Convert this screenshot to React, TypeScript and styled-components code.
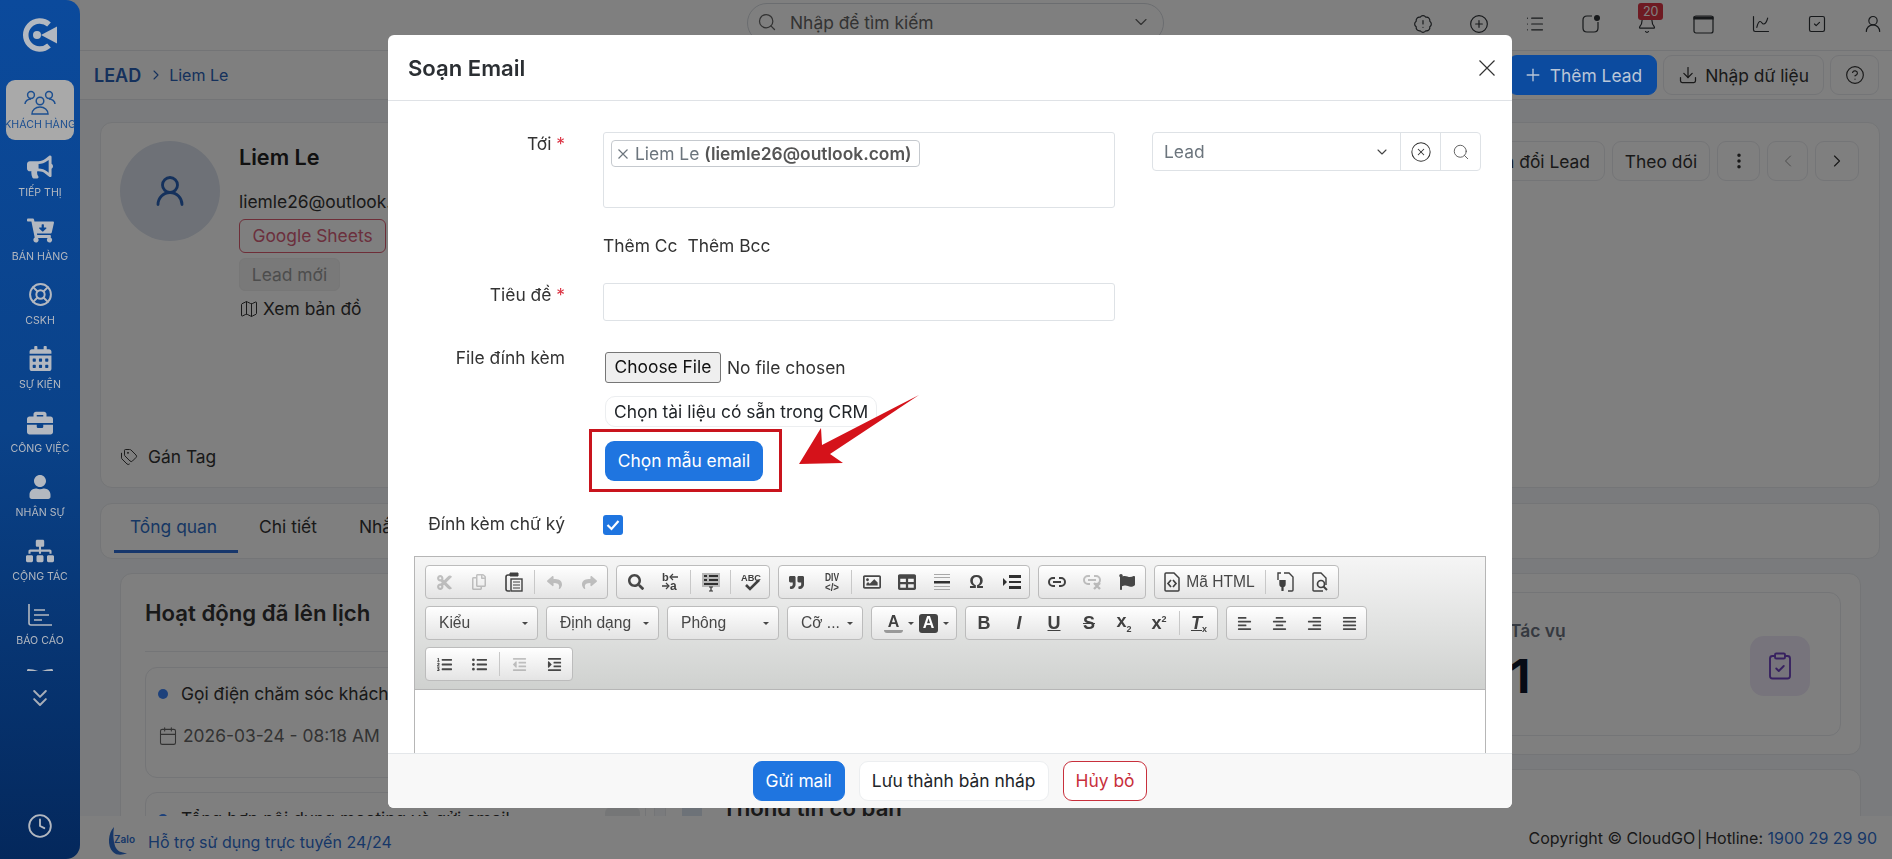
import React from 'react';
import styled, { createGlobalStyle } from 'styled-components';
import {
  BadgeAlert, Bell, ChartSpline, ChevronDown, ChevronLeft, ChevronRight, ChevronsDown, CircleHelp, CirclePlus,
  CircleX, Clock, Download, EllipsisVertical, List, LifeBuoy, Map, Plus, Search, SquareCheck, Tags, UserRound,
  ClipboardCheck, Calendar,
} from 'lucide-react';
import {
  FaAlignCenter, FaAlignJustify, FaAlignLeft, FaAlignRight, FaBookOpen, FaBriefcase, FaBullhorn, FaCalendarAlt,
  FaCartArrowDown, FaCut, FaFlag, FaIndent, FaListOl, FaListUl, FaOutdent, FaQuoteRight, FaRegCopy,
  FaRegImage, FaReply, FaSearch, FaShare, FaSitemap, FaTable, FaUser,
} from 'react-icons/fa';

const GlobalStyle = createGlobalStyle`
  html, body { margin: 0; padding: 0; height: 100%; overflow: hidden; }
  body { font-family: Inter, "Noto Sans", sans-serif; font-size: 17.4px; color: #333; }
  * { box-sizing: border-box; }
`;

const Page = styled.div`
  display: flex;
  height: 100vh;
  background: #f4f7fa;
  overflow: hidden;
`;

const Backdrop = styled.div`
  position: fixed;
  top: 0;
  left: 0;
  width: 100vw;
  height: 100vh;
  z-index: 10;
  background-color: rgba(0, 0, 0, 0.5);
`;

/* sidebar sits above the dim layer so its blue keeps the colours of the picture */
const Sidebar = styled.aside`
  position: relative;
  z-index: 11;
  flex: 0 0 80px;
  display: flex;
  flex-direction: column;
  align-items: center;
  height: 100vh;
  border-radius: 0 14px 14px 0;
  background: linear-gradient(180deg, #0b4a9c 0%, #0a4289 50%, #04285c 100%);
  color: #b3b8c0;
`;

const LogoBox = styled.div`
  height: 80px;
  display: flex;
  align-items: center;
  justify-content: center;
  padding-bottom: 10px;
`;

const NavList = styled.nav`
  height: 591px;
  width: 100%;
  overflow: hidden;
  display: flex;
  flex-direction: column;
  align-items: center;
`;

const NavItem = styled.div<{ $active?: boolean }>`
  flex: 0 0 ${(p) => (p.$active ? '60px' : '64px')};
  width: 68px;
  margin-bottom: ${(p) => (p.$active ? '4px' : '0')};
  padding-top: 9px;
  display: flex;
  flex-direction: column;
  align-items: center;
  gap: ${(p) => (p.$active ? '2px' : '6px')};
  border-radius: 9px;
  background: ${(p) => (p.$active ? '#a9a9a9' : 'transparent')};
  color: ${(p) => (p.$active ? '#1d4f90' : '#b3b8c0')};
`;

const NavIcon = styled.span`
  flex: 0 0 27px;
  height: 27px;
  display: flex;
  align-items: center;
  justify-content: center;
`;

const NavLabel = styled.span`
  font-size: 10.6px;
  line-height: 14px;
  white-space: nowrap;
  text-transform: uppercase;
`;

const SideMore = styled.div`
  margin-top: 13px;
  height: 30px;
  color: #a8aeb8;
`;

const SideClock = styled.div`
  margin-top: auto;
  margin-bottom: 20px;
  color: #b3b8c0;
  height: 26px;
`;

const MainColumn = styled.div`
  flex: 1;
  min-width: 0;
  height: 100vh;
  display: flex;
  flex-direction: column;
`;

const TopBar = styled.header`
  flex: 0 0 51px;
  display: flex;
  align-items: flex-start;
  padding: 3px 9px 0 667px;
  background: #fff;
  border-bottom: 1px solid #e6e8ec;
`;

const SearchBox = styled.div`
  width: 417px;
  height: 40px;
  padding: 0 12px 2px 9px;
  display: flex;
  align-items: center;
  gap: 13px;
  border: 1px solid #d6dae0;
  border-radius: 20px;
  color: #666;
`;

const SearchText = styled.span`
  flex: 1;
`;

const TopIcons = styled.div`
  margin-left: auto;
  margin-top: 11px;
  display: flex;
  gap: 36.2px;
  color: #2e3236;
`;

const BellWrap = styled.span`
  position: relative;
  display: block;
  width: 20px;
  height: 20px;
`;

const BellBadge = styled.span`
  position: absolute;
  left: 1px;
  top: -11px;
  width: 25px;
  height: 17px;
  background: #dc3545;
  border-radius: 3px;
  color: #fff;
  font-size: 12.5px;
  line-height: 17px;
  text-align: center;
`;

const BreadBar = styled.div`
  flex: 0 0 49px;
  display: flex;
  align-items: center;
  padding: 0 13px 0 14px;
  background: #fff;
  border-bottom: 1px solid #e6e8ec;
`;

const CrumbRoot = styled.span`
  font-size: 18px;
  font-weight: 600;
  color: #2a62b8;
`;

const CrumbSep = styled.span`
  display: flex;
  margin: 0 5px 0 7px;
  color: #2a62b8;
`;

const CrumbLeaf = styled.span`
  font-size: 16px;
  color: #2a62b8;
`;

const BarActions = styled.div`
  margin-left: auto;
  display: flex;
  gap: 6px;
`;

const PageButton = styled.div<{ $primary?: boolean; $w?: number }>`
  position: relative;
  z-index: ${(p) => (p.$primary ? 11 : 'auto')};
  height: 40px;
  width: ${(p) => (p.$w ? `${p.$w}px` : 'auto')};
  padding: 0 ${(p) => (p.$w ? '0' : '14px')};
  display: flex;
  align-items: center;
  justify-content: center;
  gap: 7px;
  border-radius: 9px;
  white-space: nowrap;
  background: ${(p) => (p.$primary ? '#0c4b9f' : '#fff')};
  color: ${(p) => (p.$primary ? '#b9c6d8' : '#333')};
  border: 1px solid ${(p) => (p.$primary ? '#0c4b9f' : '#e8eaee')};
`;

const Content = styled.main`
  flex: 1;
  min-height: 0;
  overflow: hidden;
  padding: 22px 12px 0 20px;
`;

const ProfileCard = styled.section`
  height: 366px;
  padding: 18px 20px 17px 19px;
  display: flex;
  flex-direction: column;
  background: #fff;
  border: 1px solid #e8eaee;
  border-radius: 12px;
`;

const ProfileTop = styled.div`
  display: flex;
`;

const Avatar = styled.div`
  flex: 0 0 100px;
  height: 100px;
  margin-right: 19px;
  display: flex;
  align-items: center;
  justify-content: center;
  border-radius: 50%;
  background: #dce3ee;
  color: #2a62b8;
`;

const ProfileInfo = styled.div`
  width: 300px;
`;

const PersonName = styled.div`
  font-size: 21.6px;
  font-weight: 600;
  line-height: 32px;
  color: #222;
`;

const PersonMail = styled.div`
  margin-top: 17px;
  line-height: 24px;
`;

const SourceTag = styled.div`
  margin-top: 5px;
  width: 147px;
  height: 34px;
  line-height: 32px;
  text-align: center;
  border: 1px solid #dc5c70;
  border-radius: 6px;
  color: #d7607a;
`;

const StatusTag = styled.div`
  margin-top: 5px;
  width: 101px;
  height: 33px;
  line-height: 31px;
  text-align: center;
  background: #f2f2f2;
  border: 1px solid #eeeeee;
  border-radius: 6px;
  color: #9a9a9a;
`;

const MapLink = styled.div`
  margin-top: 7px;
  display: flex;
  align-items: center;
  gap: 4px;
  line-height: 22px;
  color: #333;
`;

const ProfileActions = styled.div`
  margin-left: auto;
  display: flex;
  gap: 7px;
`;

const TagRow = styled.div`
  margin-top: auto;
  display: flex;
  align-items: center;
  gap: 10px;
  line-height: 26px;
`;

const TabsCard = styled.div`
  margin-top: 15px;
  height: 56px;
  padding-left: 13px;
  display: flex;
  background: #fff;
  border: 1px solid #e8eaee;
  border-radius: 12px;
`;

const Tab = styled.div<{ $active?: boolean }>`
  height: 49px;
  margin-right: 5px;
  padding: 0 21px 0 16px;
  line-height: 46px;
  white-space: nowrap;
  color: ${(p) => (p.$active ? '#2f6fc8' : '#333')};
  border-bottom: 3px solid ${(p) => (p.$active ? '#2f6fd8' : 'transparent')};
`;

const PanelRow = styled.div`
  margin-top: 14px;
  padding: 0 19px 0 20px;
  display: flex;
  gap: 10px;
`;

const ActivityPanel = styled.section`
  flex: 0 0 535px;
  height: 400px;
  padding: 25px 8px 0 24px;
  background: #fff;
  border: 1px solid #e8eaee;
  border-radius: 12px;
`;

const PanelTitle = styled.h3`
  margin: 0;
  font-size: 22.2px;
  font-weight: 600;
  line-height: 28px;
  color: #333;
`;

const PanelRule = styled.div`
  margin: 24px 0 15px;
  height: 1px;
  background: #e8eaee;
`;

const ActivityItem = styled.div`
  height: 111px;
  margin-bottom: 14px;
  padding: 14px 5px 0 17px;
  border: 1px solid #e8eaee;
  border-radius: 12px;
`;

const ActivityHead = styled.div`
  height: 24px;
  display: flex;
  align-items: center;
  gap: 13px;
  line-height: 24px;
  white-space: nowrap;
`;

const Dot = styled.span`
  flex: 0 0 10px;
  height: 10px;
  margin-left: -5px;
  border-radius: 50%;
  background: #3b82f6;
`;

const ActivityDate = styled.div`
  margin: 18px 0 0 -5px;
  display: flex;
  align-items: center;
  gap: 5px;
  line-height: 24px;
  color: #666;
`;

const ItemTile = styled.span`
  align-self: flex-start;
  margin-left: auto;
  flex: 0 0 35px;
  height: 36px;
  border-radius: 6px;
  background: #ebedef;
`;

const SideColumn = styled.div`
  flex: 1;
  min-width: 0;
`;

const StatsPanel = styled.section`
  height: 182px;
  padding: 18px 19px;
  display: flex;
  justify-content: flex-end;
  background: #fff;
  border: 1px solid #e8eaee;
  border-radius: 12px;
`;

const StatCard = styled.div`
  width: 356px;
  padding: 26px 30px 0 24px;
  display: flex;
  justify-content: space-between;
  border: 1px solid #e8eaee;
  border-radius: 12px;
`;

const StatLabel = styled.div`
  font-weight: 600;
  line-height: 24px;
  color: #6b7280;
`;

const StatValue = styled.div`
  margin-top: 7px;
  font-size: 47px;
  font-weight: 700;
  line-height: 52px;
  color: #0f172a;
`;

const StatTile = styled.div`
  margin-top: 17px;
  width: 60px;
  height: 60px;
  display: flex;
  align-items: center;
  justify-content: center;
  border-radius: 14px;
  background: #eee9f8;
  color: #6f42c1;
`;

const InfoPanel = styled.section`
  margin-top: 14px;
  height: 200px;
  padding: 24px 16px;
  display: flex;
  gap: 20px;
  background: #fff;
  border: 1px solid #e8eaee;
  border-radius: 12px;
`;

const InfoTile = styled.span`
  flex: 0 0 20px;
  height: 40px;
  margin-top: 13px;
  background: #dbe4f0;
`;

const FooterBar = styled.footer`
  position: relative;
  flex: 0 0 43px;
  padding: 0 15px 0 27px;
  display: flex;
  align-items: center;
  font-size: 16px;
  background: #fff;
`;

const ZaloBox = styled.span`
  display: flex;
  margin-top: 6px;
`;

const SupportText = styled.span`
  margin: 8px 0 0 12px;
  color: #2f6fd0;
`;

const Copyright = styled.span`
  margin-left: auto;
  color: #333;
`;

const HotlineNo = styled.span`
  color: #2f6fd0;
`;

const Modal = styled.div`
  position: fixed;
  z-index: 20;
  left: 388px;
  top: 35px;
  width: 1124px;
  height: 773px;
  display: flex;
  flex-direction: column;
  overflow: hidden;
  background: #fff;
  border-radius: 6px;
`;

const ModalHead = styled.div`
  flex: 0 0 66px;
  display: flex;
  align-items: center;
  justify-content: space-between;
  padding: 0 17px 0 20px;
  border-bottom: 1px solid #dfe2e6;
`;

const ModalTitle = styled.h2`
  margin: 0;
  font-size: 22.1px;
  font-weight: 600;
  color: #2b2f33;
`;

const ModalBody = styled.div`
  flex: 1;
  min-height: 0;
  overflow-y: scroll;
  padding: 31px 0 42px;

  &::-webkit-scrollbar { width: 10px; }
  &::-webkit-scrollbar-track { background: #fff; }
  &::-webkit-scrollbar-thumb { background: #c9c9c9; border-radius: 5px; }
`;

const FormRow = styled.div<{ $mt?: number }>`
  display: grid;
  grid-template-columns: 177px 512px auto;
  column-gap: 38px;
  margin-top: ${(p) => p.$mt ?? 0}px;
`;

const FieldLabel = styled.label<{ $lift?: number }>`
  margin-top: ${(p) => -(p.$lift ?? 0)}px;
  text-align: right;
  line-height: 24px;
  color: #333;
`;

const Star = styled.span`
  color: #dc3545;
`;

const RecipientBox = styled.div`
  height: 76px;
  padding: 7px;
  border: 1px solid #dee2e6;
  border-radius: 3px;
`;

const RecipientChip = styled.div`
  display: inline-flex;
  align-items: center;
  height: 27px;
  padding: 0 7px 0 5px;
  gap: 6px;
  background: #fff;
  border: 1px solid #c5c9ce;
  border-radius: 4px;
  color: #6c757d;
  white-space: nowrap;
`;

const ChipAddress = styled.b`
  font-weight: 600;
  color: #555;
`;

const CcLinks = styled.div`
  display: flex;
  gap: 10px;
  line-height: 24px;
`;

const TextInput = styled.div`
  height: 38px;
  border: 1px solid #dee2e6;
  border-radius: 3px;
`;

const PickerGroup = styled.div`
  margin-left: -1px;
  width: 329px;
  height: 39px;
  display: flex;
  border: 1px solid #dee2e6;
  border-radius: 4px;
  color: #6c757d;
`;

const PickerSelect = styled.div`
  flex: 1;
  padding: 0 10px 0 11px;
  display: flex;
  align-items: center;
  justify-content: space-between;
`;

const PickerBtn = styled.div`
  flex: 0 0 40px;
  display: flex;
  align-items: center;
  justify-content: center;
  border-left: 1px solid #dee2e6;
`;

const FileLine = styled.div`
  margin-left: 2px;
  display: flex;
  align-items: center;
  gap: 6px;
  height: 31px;
  color: #333;
`;

const FileButton = styled.div`
  width: 116px;
  height: 31px;
  line-height: 28px;
  text-align: center;
  background: #efefef;
  border: 1px solid #767676;
  border-radius: 3px;
  color: #111;
`;

const DocButton = styled.div`
  margin: 13px 0 14px 2px;
  width: 272px;
  height: 31px;
  padding-left: 8px;
  line-height: 29px;
  white-space: nowrap;
  background: #fff;
  border: 1px solid #eceef0;
  border-radius: 10px;
  color: #212529;
`;

const TemplateWrap = styled.div`
  position: relative;
  margin-left: 2px;
  width: 158px;
  height: 40px;
`;

const TemplateButton = styled.div`
  height: 40px;
  line-height: 40px;
  text-align: center;
  background: #1f75e0;
  border-radius: 9px;
  color: #fff;
`;

const Highlight = styled.span`
  position: absolute;
  left: -16px;
  top: -12px;
  width: 193px;
  height: 63px;
  border: 3px solid #c9141d;
`;

const Arrow = styled.svg`
  position: absolute;
  left: 194px;
  top: -46px;
`;

const CheckBox = styled.span`
  display: flex;
  align-items: center;
  justify-content: center;
  width: 20px;
  height: 20px;
  border-radius: 3px;
  background: #1f75e0;
  color: #fff;
`;

const Editor = styled.div`
  margin: 20px 0 0 26px;
  width: 1072px;
  border: 1px solid #b6b6b6;
  font-family: "Liberation Sans", Arial, sans-serif;
  font-size: 15.6px;
  color: #474747;
`;

const EditorTools = styled.div`
  height: 133px;
  padding: 8px 0 0 10px;
  display: flex;
  flex-direction: column;
  gap: 7px;
  background: linear-gradient(180deg, #f5f5f5, #cfd1cf);
  border-bottom: 1px solid #b6b6b6;
`;

const EditorArea = styled.div`
  height: 200px;
  background: #fff;
`;

const ToolRow = styled.div`
  height: 34px;
  display: flex;
  gap: 8px;
`;

const ToolGroup = styled.div<{ $w: number }>`
  width: ${(p) => p.$w}px;
  height: 34px;
  display: flex;
  align-items: center;
  justify-content: center;
  background: linear-gradient(180deg, #fff, #e4e4e4);
  border: 1px solid #bcbcbc;
  border-radius: 4px;
`;

const ToolBtn = styled.span<{ $off?: boolean; $wide?: boolean; $narrow?: boolean }>`
  flex: 0 0 ${(p) => (p.$wide ? 'auto' : p.$narrow ? '29px' : '35px')};
  height: 100%;
  padding: 0 ${(p) => (p.$wide ? '8px' : '0')};
  display: flex;
  align-items: center;
  justify-content: center;
  gap: ${(p) => (p.$wide ? '5px' : '0')};
  opacity: ${(p) => (p.$off ? 0.3 : 1)};
`;

const ToolSep = styled.span`
  flex: 0 0 1px;
  height: 24px;
  margin: 0 2px;
  background: #c8c8c8;
`;

const Combo = styled.div<{ $w: number }>`
  width: ${(p) => p.$w}px;
  height: 34px;
  padding: 0 9px 0 13px;
  display: flex;
  align-items: center;
  justify-content: space-between;
  white-space: nowrap;
  background: linear-gradient(180deg, #fff, #e4e4e4);
  border: 1px solid #bcbcbc;
  border-radius: 4px;
`;

const Caret = styled.i`
  width: 0;
  height: 0;
  border: 3px solid transparent;
  border-top: 3px solid #474747;
  border-bottom: 0;
`;

const FormatGlyph = styled.span<{ $italic?: boolean; $under?: boolean; $strike?: boolean }>`
  font-family: "Liberation Sans", Arial, sans-serif;
  font-size: 18px;
  font-weight: 700;
  line-height: 1;
  color: #404040;
  font-style: ${(p) => (p.$italic ? 'italic' : 'normal')};
  text-decoration: ${(p) => (p.$under ? 'underline' : p.$strike ? 'line-through' : 'none')};

  sub, sup { font-size: 9px; }
`;

const ColorA = styled.span<{ $fill?: boolean }>`
  width: 19px;
  height: 19px;
  display: flex;
  align-items: center;
  justify-content: center;
  border-radius: 3px;
  font-size: 16px;
  font-weight: 700;
  color: ${(p) => (p.$fill ? '#fff' : '#404040')};
  background: ${(p) => (p.$fill ? '#444' : 'transparent')};
  border-bottom: ${(p) => (p.$fill ? '0' : '3px solid #999')};
`;

const ModalFoot = styled.div`
  flex: 0 0 55px;
  display: flex;
  align-items: center;
  justify-content: center;
  gap: 14px;
  background: #f8f8f8;
  border-top: 1px solid #e4e7ea;
`;

const FootButton = styled.div<{ $kind: 'primary' | 'plain' | 'danger' }>`
  height: 40px;
  padding: 0 12px;
  line-height: 38px;
  border-radius: 9px;
  white-space: nowrap;
  background: ${(p) => (p.$kind === 'primary' ? '#1f75e0' : '#fff')};
  color: ${(p) => (p.$kind === 'primary' ? '#fff' : p.$kind === 'danger' ? '#c8303c' : '#212529')};
  border: 1px solid ${(p) => (p.$kind === 'primary' ? '#1f75e0' : p.$kind === 'danger' ? '#c8303c' : '#eceef0')};
`;

function Logo() {
  return (
    <svg width="38" height="34" viewBox="0 0 38 34">
      <path d="M28 6.5A14 14 0 1 0 28 27.5" fill="none" stroke="#b3b8c0" strokeWidth="5.5" />
      <circle cx="16" cy="17" r="4" fill="#b3b8c0" />
      <path d="M20 17 36 8.5V25.5Z" fill="#b3b8c0" />
    </svg>
  );
}

function CrowdIcon() {
  return (
    <svg width="32" height="28" viewBox="0 0 32 28" fill="none" stroke="currentColor" strokeWidth="1.5">
      <circle cx="7" cy="6" r="3.4" />
      <circle cx="25" cy="6" r="3.4" />
      <circle cx="16" cy="12" r="3.8" />
      <path d="M1 15c0-3 3-5 6-5M31 15c0-3-3-5-6-5M8 25c0-4 3.500-7 8-7s8 3 8 7z" />
    </svg>
  );
}

function ReportIcon() {
  return (
    <svg width="26" height="24" viewBox="0 0 26 24" fill="none" stroke="currentColor" strokeWidth="1.6">
      <path d="M2 1v19q0 2 2 2h21M7 7h11M7 12h15M7 17h8" />
    </svg>
  );
}

function ChatDotIcon() {
  return (
    <svg width="20" height="20" viewBox="0 0 20 20" fill="none" stroke="currentColor" strokeWidth="1.2">
      <path d="M11 2H6Q2 2 2 6v8q0 4 4 4h7q4 0 4-4V8" />
      <circle cx="16" cy="4" r="3" fill="currentColor" stroke="none" />
    </svg>
  );
}

function TopCalendar() {
  return (
    <svg width="21" height="20" viewBox="0 0 21 20" fill="none" stroke="currentColor" strokeWidth="1.2">
      <rect x="1" y="2" width="19" height="17" rx="2" />
      <path d="M1 3h19v2H1z" fill="currentColor" />
    </svg>
  );
}

function ZaloMark() {
  return (
    <svg width="29" height="30" viewBox="0 0 29 30">
      <path d="M7 1C1 7 0 20 6 26c4 4 10 3 14 1-6 0-10-2-12-7C6 14 6 7 7 1Z" fill="#2f6fd0" />
      <text x="7" y="17" fontFamily="Inter, sans-serif" fontSize="10" fontWeight="600" fill="#2f6fd0">Zalo</text>
    </svg>
  );
}

function PasteIcon() {
  return (
    <svg width="18" height="20" viewBox="0 0 18 20" fill="none" stroke="#404040">
      <path d="M5 3H3Q1 3 1 5v12q0 2 2 2h2" strokeWidth="1.6" />
      <path d="M5 1h8v3H5z" fill="#404040" />
      <rect x="6" y="7" width="11" height="12" strokeWidth="1.4" />
      <path d="M8 10h7M8 13h7M8 16h7" strokeWidth="1.2" />
    </svg>
  );
}

function ReplaceIcon() {
  return (
    <svg width="20" height="20" viewBox="0 0 20 20">
      <text x="1" y="9" fontFamily="Liberation Sans" fontSize="11" fontWeight="700" fill="#404040">b</text>
      <text x="9" y="18" fontFamily="Liberation Sans" fontSize="12" fontWeight="700" fill="#404040">a</text>
      <path d="M10 5h7M1 14h6" stroke="#404040" strokeWidth="1.3" />
      <path d="M12 2 9 5l3 3M5 11l3 3-3 3" fill="none" stroke="#404040" strokeWidth="1.2" />
    </svg>
  );
}

function SelectAllIcon() {
  return (
    <svg width="20" height="20" viewBox="0 0 20 20">
      <rect x="1" y="1" width="18" height="14" fill="#b9b9b9" />
      <path d="M3 3h3v2H3zM8 3h9v2H8zM3 7h3v2H3zM8 7h9v2H8zM3 11h14v2H3z" fill="#303030" />
      <path d="M8 15h4M10 15v4M8 19h4" stroke="#303030" strokeWidth="1.2" />
    </svg>
  );
}

function SpellIcon() {
  return (
    <svg width="22" height="20" viewBox="0 0 22 20">
      <text x="1" y="9" fontFamily="Liberation Sans" fontSize="9.500" fontWeight="700" textLength="20" lengthAdjust="spacingAndGlyphs" fill="#404040">ABC</text>
      <path d="M6 13l4 4 9-9" fill="none" stroke="#404040" strokeWidth="2.600" />
    </svg>
  );
}

function DivIcon() {
  return (
    <svg width="20" height="22" viewBox="0 0 20 22">
      <text x="3" y="10" fontFamily="Liberation Sans" fontSize="10.500" fontWeight="700" textLength="14" lengthAdjust="spacingAndGlyphs" fill="#404040">DIV</text>
      <text x="3" y="20" fontFamily="Liberation Sans" fontSize="10.500" fontWeight="700" textLength="14" lengthAdjust="spacingAndGlyphs" fill="#404040">&lt;/&gt;</text>
    </svg>
  );
}

function RuleIcon() {
  return (
    <svg width="20" height="20" viewBox="0 0 20 20">
      <path d="M2 2h16v1H2zM2 5h16v1H2zM2 14h16v1H2zM2 17h16v1H2z" fill="#a8a8a8" />
      <path d="M2 9h16v2.500H2z" fill="#303030" />
    </svg>
  );
}

function BreakIcon() {
  return (
    <svg width="20" height="20" viewBox="0 0 20 20">
      <path d="M1 6l4 4-4 4z" fill="#303030" />
      <path d="M7 3h12v3H7zM7 9h12v2H7zM7 14h12v3H7z" fill="#303030" />
    </svg>
  );
}

function ChainIcon() {
  return (
    <svg width="18" height="12" viewBox="0 0 18 12" fill="none" stroke="#404040" strokeWidth="2">
      <path d="M7 2H5a4 4 0 0 0 0 8h2M11 2h2a4 4 0 0 1 0 8h-2M5 6h8" />
    </svg>
  );
}

function BrokenChainIcon() {
  return (
    <svg width="18" height="16" viewBox="0 0 18 16" fill="none" stroke="#404040" strokeWidth="2">
      <path d="M7 2H5a4 4 0 0 0 0 8h2M11 2h2a4 4 0 0 1 0 8h-2M5 6h8" />
      <path d="M11 9l6 6M17 9l-6 6" strokeWidth="2.400" />
    </svg>
  );
}

function SourceIcon() {
  return (
    <svg width="18" height="20" viewBox="0 0 18 20" fill="none" stroke="#404040" strokeWidth="1.500">
      <path d="M3 1h8l5 5v12q0 1-1 1H3q-1 0-1-1V2q0-1 1-1z" />
      <path d="M8 8 5 11.500 8 15M10 8l3 3.500L10 15" strokeWidth="1.700" />
    </svg>
  );
}

function TemplatesIcon() {
  return (
    <svg width="18" height="20" viewBox="0 0 18 20" fill="none" stroke="#404040" strokeWidth="1.400">
      <path d="M8 1h5l4 4v13q0 1-1 1h-4M5 1H2v7" />
      <path d="M4 8v4a2.500 2.500 0 0 0 5 0V8" fill="#404040" />
      <path d="M6.500 14v5" strokeWidth="2.200" />
    </svg>
  );
}

function PreviewIcon() {
  return (
    <svg width="18" height="20" viewBox="0 0 18 20" fill="none" stroke="#404040" strokeWidth="1.400">
      <path d="M12 19H3q-1 0-1-1V2q0-1 1-1h7l5 5v7" />
      <circle cx="10" cy="12" r="3.500" strokeWidth="1.700" />
      <path d="M12.500 14.500 16 18" strokeWidth="2" />
    </svg>
  );
}

const navItems: { label: string; icon: React.ReactNode; active?: boolean }[] = [
  { label: 'Khách hàng', icon: <CrowdIcon />, active: true },
  { label: 'Tiếp thị', icon: <FaBullhorn size={26} /> },
  { label: 'Bán hàng', icon: <FaCartArrowDown size={27} /> },
  { label: 'CSKH', icon: <LifeBuoy size={25} strokeWidth={1.9} /> },
  { label: 'Sự kiện', icon: <FaCalendarAlt size={25} /> },
  { label: 'Công việc', icon: <FaBriefcase size={26} /> },
  { label: 'Nhân sự', icon: <FaUser size={24} /> },
  { label: 'Cộng tác', icon: <FaSitemap size={28} /> },
  { label: 'Báo cáo', icon: <ReportIcon /> },
  { label: 'Tài liệu', icon: <FaBookOpen size={26} /> },
];

function Toolbar() {
  return (
    <EditorTools>
      <ToolRow>
        <ToolGroup $w={183}>
          <ToolBtn $off><FaCut size={17} /></ToolBtn>
          <ToolBtn $off><FaRegCopy size={16} /></ToolBtn>
          <ToolBtn><PasteIcon /></ToolBtn>
          <ToolSep />
          <ToolBtn $off><FaReply size={15} /></ToolBtn>
          <ToolBtn $off><FaShare size={15} /></ToolBtn>
        </ToolGroup>
        <ToolGroup $w={154}>
          <ToolBtn><FaSearch size={16} /></ToolBtn>
          <ToolBtn><ReplaceIcon /></ToolBtn>
          <ToolSep />
          <ToolBtn><SelectAllIcon /></ToolBtn>
          <ToolSep />
          <ToolBtn><SpellIcon /></ToolBtn>
        </ToolGroup>
        <ToolGroup $w={252}>
          <ToolBtn><FaQuoteRight size={15} /></ToolBtn>
          <ToolBtn><DivIcon /></ToolBtn>
          <ToolSep />
          <ToolBtn><FaRegImage size={18} /></ToolBtn>
          <ToolBtn><FaTable size={18} /></ToolBtn>
          <ToolBtn><RuleIcon /></ToolBtn>
          <ToolBtn><FormatGlyph>Ω</FormatGlyph></ToolBtn>
          <ToolBtn><BreakIcon /></ToolBtn>
        </ToolGroup>
        <ToolGroup $w={108}>
          <ToolBtn><ChainIcon /></ToolBtn>
          <ToolBtn $off><BrokenChainIcon /></ToolBtn>
          <ToolBtn><FaFlag size={16} /></ToolBtn>
        </ToolGroup>
        <ToolGroup $w={185}>
          <ToolBtn $wide><SourceIcon />Mã HTML</ToolBtn>
          <ToolSep />
          <ToolBtn><TemplatesIcon /></ToolBtn>
          <ToolBtn><PreviewIcon /></ToolBtn>
        </ToolGroup>
      </ToolRow>
      <ToolRow>
        <Combo $w={113}>Kiểu<Caret /></Combo>
        <Combo $w={113}>Định dạng<Caret /></Combo>
        <Combo $w={112}>Phông<Caret /></Combo>
        <Combo $w={76}>Cỡ ...<Caret /></Combo>
        <ToolGroup $w={86}>
          <ToolBtn $narrow><ColorA>A</ColorA></ToolBtn>
          <Caret />
          <ToolBtn $narrow><ColorA $fill>A</ColorA></ToolBtn>
          <Caret />
        </ToolGroup>
        <ToolGroup $w={253}>
          <ToolBtn><FormatGlyph>B</FormatGlyph></ToolBtn>
          <ToolBtn><FormatGlyph $italic>I</FormatGlyph></ToolBtn>
          <ToolBtn><FormatGlyph $under>U</FormatGlyph></ToolBtn>
          <ToolBtn><FormatGlyph $strike>S</FormatGlyph></ToolBtn>
          <ToolBtn><FormatGlyph>x<sub>2</sub></FormatGlyph></ToolBtn>
          <ToolBtn><FormatGlyph>x<sup>2</sup></FormatGlyph></ToolBtn>
          <ToolSep />
          <ToolBtn><FormatGlyph $italic $under>T</FormatGlyph><FormatGlyph><sub>x</sub></FormatGlyph></ToolBtn>
        </ToolGroup>
        <ToolGroup $w={141}>
          <ToolBtn><FaAlignLeft size={15} /></ToolBtn>
          <ToolBtn><FaAlignCenter size={15} /></ToolBtn>
          <ToolBtn><FaAlignRight size={15} /></ToolBtn>
          <ToolBtn><FaAlignJustify size={15} /></ToolBtn>
        </ToolGroup>
      </ToolRow>
      <ToolRow>
        <ToolGroup $w={148}>
          <ToolBtn><FaListOl size={15} /></ToolBtn>
          <ToolBtn><FaListUl size={15} /></ToolBtn>
          <ToolSep />
          <ToolBtn $off><FaOutdent size={15} /></ToolBtn>
          <ToolBtn><FaIndent size={15} /></ToolBtn>
        </ToolGroup>
      </ToolRow>
    </EditorTools>
  );
}

export default function App() {
  return (
    <Page>
      <GlobalStyle />
      <Sidebar>
        <LogoBox><Logo /></LogoBox>
        <NavList>
          {navItems.map((item) => (
            <NavItem key={item.label} $active={item.active}>
              <NavIcon>{item.icon}</NavIcon>
              <NavLabel>{item.label}</NavLabel>
            </NavItem>
          ))}
        </NavList>
        <SideMore><ChevronsDown size={28} strokeWidth={1.7} /></SideMore>
        <SideClock><Clock size={26} strokeWidth={1.7} /></SideClock>
      </Sidebar>

      <MainColumn>
        <TopBar>
          <SearchBox>
            <Search size={20} strokeWidth={1.5} />
            <SearchText>Nhập để tìm kiếm</SearchText>
            <ChevronDown size={20} strokeWidth={1.4} />
          </SearchBox>
          <TopIcons>
            <BadgeAlert size={20} strokeWidth={1.4} />
            <CirclePlus size={20} strokeWidth={1.4} />
            <List size={20} strokeWidth={1.4} />
            <ChatDotIcon />
            <BellWrap>
              <Bell size={20} strokeWidth={1.4} />
              <BellBadge>20</BellBadge>
            </BellWrap>
            <TopCalendar />
            <ChartSpline size={20} strokeWidth={1.4} />
            <SquareCheck size={20} strokeWidth={1.4} />
            <UserRound size={20} strokeWidth={1.4} />
          </TopIcons>
        </TopBar>

        <BreadBar>
          <CrumbRoot>LEAD</CrumbRoot>
          <CrumbSep><ChevronRight size={16} strokeWidth={1.6} /></CrumbSep>
          <CrumbLeaf>Liem Le</CrumbLeaf>
          <BarActions>
            <PageButton $primary><Plus size={20} strokeWidth={1.6} />Thêm Lead</PageButton>
            <PageButton><Download size={20} strokeWidth={1.5} />Nhập dữ liệu</PageButton>
            <PageButton $w={49}><CircleHelp size={20} strokeWidth={1.4} /></PageButton>
          </BarActions>
        </BreadBar>

        <Content>
          <ProfileCard>
            <ProfileTop>
              <Avatar><UserRound size={36} strokeWidth={1.9} /></Avatar>
              <ProfileInfo>
                <PersonName>Liem Le</PersonName>
                <PersonMail>liemle26@outlook.com</PersonMail>
                <SourceTag>Google Sheets</SourceTag>
                <StatusTag>Lead mới</StatusTag>
                <MapLink><Map size={20} strokeWidth={1.2} />Xem bản đồ</MapLink>
              </ProfileInfo>
              <ProfileActions>
                <PageButton>Chuyển đổi Lead</PageButton>
                <PageButton $w={98}>Theo dõi</PageButton>
                <PageButton $w={43}><EllipsisVertical size={20} strokeWidth={2.2} /></PageButton>
                <PageButton $w={41}><ChevronLeft size={20} strokeWidth={1.2} color="#999" /></PageButton>
                <PageButton $w={44}><ChevronRight size={20} strokeWidth={1.4} /></PageButton>
              </ProfileActions>
            </ProfileTop>
            <TagRow><Tags size={18} strokeWidth={1.3} />Gán Tag</TagRow>
          </ProfileCard>

          <TabsCard>
            <Tab $active>Tổng quan</Tab>
            <Tab>Chi tiết</Tab>
            <Tab>Nhắc nhở</Tab>
          </TabsCard>

          <PanelRow>
            <ActivityPanel>
              <PanelTitle>Hoạt động đã lên lịch</PanelTitle>
              <PanelRule />
              <ActivityItem>
                <ActivityHead><Dot />Gọi điện chăm sóc khách hàng</ActivityHead>
                <ActivityDate><Calendar size={20} strokeWidth={1.3} />2026-03-24 - 08:18 AM</ActivityDate>
              </ActivityItem>
              <ActivityItem>
                <ActivityHead><Dot />Tổng hợp nội dung meeting và gửi email<ItemTile /></ActivityHead>
              </ActivityItem>
            </ActivityPanel>
            <SideColumn>
              <StatsPanel>
                <StatCard>
                  <div>
                    <StatLabel>Tác vụ</StatLabel>
                    <StatValue>1</StatValue>
                  </div>
                  <StatTile><ClipboardCheck size={30} strokeWidth={1.5} /></StatTile>
                </StatCard>
              </StatsPanel>
              <InfoPanel>
                <InfoTile />
                <PanelTitle>Thông tin cơ bản</PanelTitle>
              </InfoPanel>
            </SideColumn>
          </PanelRow>
        </Content>

        <FooterBar>
          <ZaloBox><ZaloMark /></ZaloBox>
          <SupportText>Hỗ trợ sử dụng trực tuyến 24/24</SupportText>
          <Copyright>Copyright © CloudGO│Hotline: <HotlineNo>1900 29 29 90</HotlineNo></Copyright>
        </FooterBar>
      </MainColumn>

      <Backdrop />

      <Modal>
        <ModalHead>
          <ModalTitle>Soạn Email</ModalTitle>
          <svg width="16" height="16" viewBox="0 0 16 16" stroke="#333" strokeWidth="1.2">
            <path d="M0.500 0.500 15.500 15.500M15.500 0.500 0.500 15.500" />
          </svg>
        </ModalHead>

        <ModalBody>
          <FormRow>
            <FieldLabel>Tới <Star>*</Star></FieldLabel>
            <RecipientBox>
              <RecipientChip>
                <svg width="12" height="12" viewBox="0 0 12 12" stroke="#6c757d" strokeWidth="1.2">
                  <path d="M1.500 1.500 10.500 10.500M10.500 1.500 1.500 10.500" />
                </svg>
                <span>Liem Le <ChipAddress>(liemle26@outlook.com)</ChipAddress></span>
              </RecipientChip>
            </RecipientBox>
            <PickerGroup>
              <PickerSelect>Lead<ChevronDown size={16} strokeWidth={1.6} color="#444" /></PickerSelect>
              <PickerBtn><CircleX size={22} strokeWidth={1.1} color="#333" /></PickerBtn>
              <PickerBtn><Search size={18} strokeWidth={1.2} color="#555" /></PickerBtn>
            </PickerGroup>
          </FormRow>

          <FormRow $mt={26}>
            <span />
            <CcLinks><span>Thêm Cc</span><span>Thêm Bcc</span></CcLinks>
          </FormRow>

          <FormRow $mt={25}>
            <FieldLabel>Tiêu đề <Star>*</Star></FieldLabel>
            <TextInput />
          </FormRow>

          <FormRow $mt={31}>
            <FieldLabel $lift={6}>File đính kèm</FieldLabel>
            <div>
              <FileLine><FileButton>Choose File</FileButton>No file chosen</FileLine>
              <DocButton>Chọn tài liệu có sẵn trong CRM</DocButton>
              <TemplateWrap>
                <TemplateButton>Chọn mẫu email</TemplateButton>
                <Highlight />
                <Arrow width="120" height="70" viewBox="0 0 120 70">
                  <polygon points="0,69 22,33 23,50 120,0 31,59 44,68" fill="#d5121a" />
                </Arrow>
              </TemplateWrap>
            </div>
          </FormRow>

          <FormRow $mt={34}>
            <FieldLabel $lift={3}>Đính kèm chữ ký</FieldLabel>
            <CheckBox>
              <svg width="14" height="12" viewBox="0 0 14 12" fill="none" stroke="#fff" strokeWidth="2.2">
                <path d="M1.500 6 5.500 10 12.500 2" />
              </svg>
            </CheckBox>
          </FormRow>

          <Editor>
            <Toolbar />
            <EditorArea />
          </Editor>
        </ModalBody>

        <ModalFoot>
          <FootButton $kind="primary">Gửi mail</FootButton>
          <FootButton $kind="plain">Lưu thành bản nháp</FootButton>
          <FootButton $kind="danger">Hủy bỏ</FootButton>
        </ModalFoot>
      </Modal>
    </Page>
  );
}
